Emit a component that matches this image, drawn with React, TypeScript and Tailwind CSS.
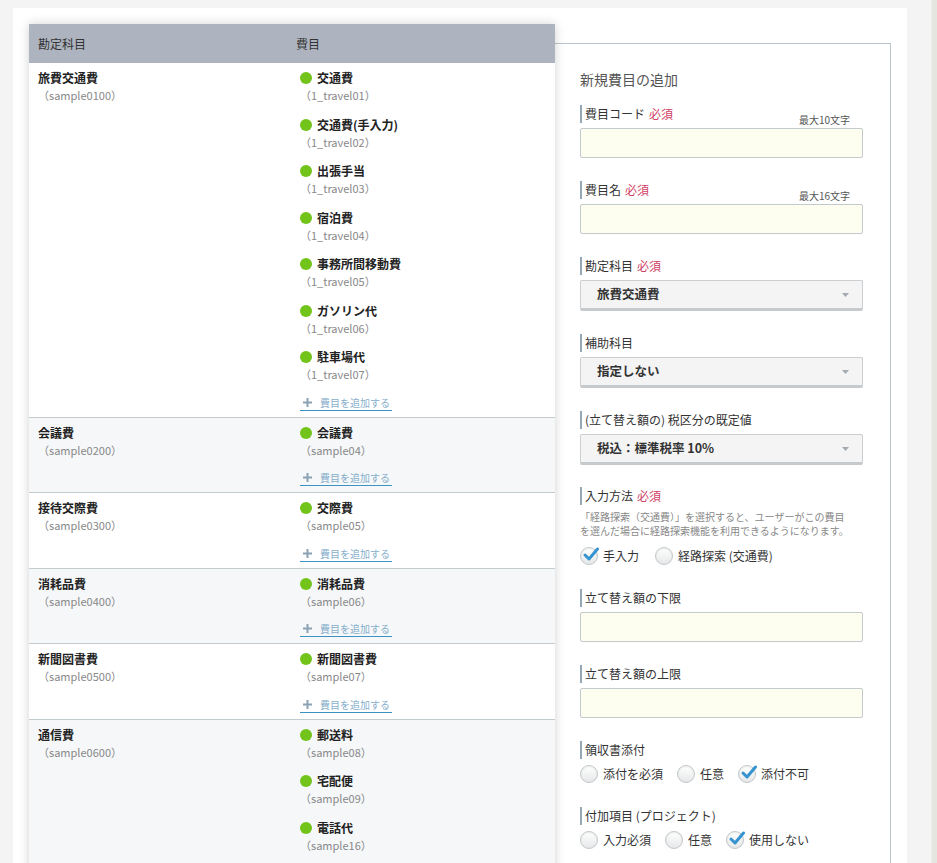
import React from "react";

type Item = { name: string; code: string };
type Account = { name: string; code: string; items: Item[] };

const accounts: Account[] = [
  {
    name: "旅費交通費",
    code: "sample0100",
    items: [
      { name: "交通費", code: "1_travel01" },
      { name: "交通費(手入力)", code: "1_travel02" },
      { name: "出張手当", code: "1_travel03" },
      { name: "宿泊費", code: "1_travel04" },
      { name: "事務所間移動費", code: "1_travel05" },
      { name: "ガソリン代", code: "1_travel06" },
      { name: "駐車場代", code: "1_travel07" },
    ],
  },
  { name: "会議費", code: "sample0200", items: [{ name: "会議費", code: "sample04" }] },
  { name: "接待交際費", code: "sample0300", items: [{ name: "交際費", code: "sample05" }] },
  { name: "消耗品費", code: "sample0400", items: [{ name: "消耗品費", code: "sample06" }] },
  { name: "新聞図書費", code: "sample0500", items: [{ name: "新聞図書費", code: "sample07" }] },
  {
    name: "通信費",
    code: "sample0600",
    items: [
      { name: "郵送料", code: "sample08" },
      { name: "宅配便", code: "sample09" },
      { name: "電話代", code: "sample16" },
    ],
  },
];

// Field label with the little bar on the left
function Label({ text, required, max }: { text: string; required?: boolean; max?: string }) {
  return (
    <div className="flex items-end justify-between h-[18px] mb-[5px]">
      <div className="border-l-2 border-[#93a9b7] pl-[3px] text-[12px] leading-[18px] text-[#333]">
        {text}
        {required && <span className="ml-[4px] text-[#cf3f66]">必須</span>}
      </div>
      {max && (
        <span className="text-[10px] leading-[10px] text-[#555] mr-[13px] mb-[-2px]">{max}</span>
      )}
    </div>
  );
}

function TextInput() {
  return <div className="h-[30px] rounded-[2px] border border-[#c3cacd] bg-[#fdfdf0]" />;
}

function Select({ value }: { value: string }) {
  return (
    <div className="h-[31px] rounded-[2px] border border-[#cbcfd1] border-b-[3px] border-b-[#c7cacc] bg-[#f4f4f4] flex items-center justify-between pl-[16px] pr-[13px]">
      <span className="text-[12.5px] font-bold text-[#333]">{value}</span>
      <svg width="7" height="4" viewBox="0 0 7 4">
        <path d="M0 0 L7 0 L3.5 4 Z" fill="#a3abb1" />
      </svg>
    </div>
  );
}

function Radio({ label, checked }: { label: string; checked?: boolean }) {
  return (
    <label className="flex items-center gap-[5px]">
      <span className="relative w-[18px] h-[18px] rounded-full border border-[#c2c7cb] bg-linear-to-b from-white to-[#e6e7e8] shadow-[inset_0_1px_2px_rgba(0,0,0,0.08)]">
        {checked && (
          <svg className="absolute -top-[2px] left-[1px]" width="18" height="17" viewBox="0 0 18 17">
            <path
              d="M3 9 L7 13 L15.5 3"
              stroke="#3593cf"
              strokeWidth="3"
              fill="none"
              strokeLinecap="round"
              strokeLinejoin="round"
            />
          </svg>
        )}
      </span>
      <span className="text-[12px] leading-[18px] text-[#333]">{label}</span>
    </label>
  );
}

export default function App() {
  return (
    <div
      className="min-h-screen flex bg-[#f4f4f4]"
      style={{ fontFamily: '"Noto Sans CJK JP", "Noto Sans", sans-serif' }}
    >
      <div className="flex-1 pl-[13px] pt-2 pr-[24px]">
        <div className="bg-white pl-4 pt-4 flex items-start min-h-[855px]">
          {/* Account / expense item table */}
          <div className="w-[526px] relative z-10 bg-white shadow-[0_0_10px_rgba(0,0,0,0.18)]">
            <div className="flex h-[39px] items-center bg-[#adb4bf] text-[12px] text-[#333]">
              <div className="w-[258px] pl-[9px]">勘定科目</div>
              <div className="pl-[9px]">費目</div>
            </div>
            {accounts.map((acc, i) => (
              <div
                key={acc.code}
                className={`flex border-b border-[#c3cbcf] pt-[6px] pb-[6px] ${
                  i % 2 === 1 ? "bg-[#f5f7f9]" : "bg-white"
                }`}
              >
                <div className="w-[258px] pl-[9px]">
                  <div className="text-[12px] leading-[18px] font-bold text-[#222]">{acc.name}</div>
                  <div className="text-[11px] leading-[16px] text-[#888]">（{acc.code}）</div>
                </div>
                <div className="pl-[13px] flex flex-col gap-[12.5px]">
                  {acc.items.map((item) => (
                    <div key={item.code}>
                      <div className="flex items-center gap-[5px] text-[12px] leading-[18px] font-bold text-[#222]">
                        <span className="w-3 h-3 rounded-full bg-[#72c41a]" />
                        {item.name}
                      </div>
                      <div className="text-[11px] leading-[16px] text-[#888]">（{item.code}）</div>
                    </div>
                  ))}
                  <div className="self-start flex items-center gap-[8px] pl-[3px] pr-[2px] border-b border-[#3c92c3] text-[10px] leading-[15px] text-[#86aecb]">
                    <svg width="9" height="9" viewBox="0 0 9 9">
                      <path d="M4.5 0 V9 M0 4.5 H9" stroke="#8ba3b5" strokeWidth="2" />
                    </svg>
                    費目を追加する
                  </div>
                </div>
              </div>
            ))}
          </div>

          {/* New expense item form */}
          <div className="mt-[19px] w-[336px] border-t border-r border-[#bcc5c9] pl-[25px] pr-[27px] pt-[25px] pb-[30px]">
            <div className="text-[14px] leading-[20px] text-[#555] mb-[16px]">新規費目の追加</div>

            <div className="mb-[23px]">
              <Label text="費目コード" required max="最大10文字" />
              <TextInput />
            </div>
            <div className="mb-[23px]">
              <Label text="費目名" required max="最大16文字" />
              <TextInput />
            </div>
            <div className="mb-[23px]">
              <Label text="勘定科目" required />
              <Select value="旅費交通費" />
            </div>
            <div className="mb-[23px]">
              <Label text="補助科目" />
              <Select value="指定しない" />
            </div>
            <div className="mb-[22px]">
              <Label text="(立て替え額の) 税区分の既定値" />
              <Select value="税込：標準税率 10%" />
            </div>
            <div className="mb-[24px]">
              <Label text="入力方法" required />
              <div className="text-[10px] leading-[14px] text-[#888]">
                「経路探索（交通費）」を選択すると、ユーザーがこの費目
                <br />
                を選んだ場合に経路探索機能を利用できるようになります。
              </div>
              <div className="flex items-center gap-[16px] mt-[9px]">
                <Radio label="手入力" checked />
                <Radio label="経路探索 (交通費)" />
              </div>
            </div>
            <div className="mb-[23px]">
              <Label text="立て替え額の下限" />
              <TextInput />
            </div>
            <div className="mb-[23px]">
              <Label text="立て替え額の上限" />
              <TextInput />
            </div>
            <div className="mb-[24px]">
              <Label text="領収書添付" />
              <div className="flex items-center gap-[14px] mt-[6px]">
                <Radio label="添付を必須" />
                <Radio label="任意" />
                <Radio label="添付不可" checked />
              </div>
            </div>
            <div>
              <Label text="付加項目 (プロジェクト)" />
              <div className="flex items-center gap-[14px] mt-[6px]">
                <Radio label="入力必須" />
                <Radio label="任意" />
                <Radio label="使用しない" checked />
              </div>
            </div>
          </div>
        </div>
      </div>
      <div className="w-[6px] bg-[#e6e6e1] border-l border-[#ededea]" />
    </div>
  );
}
